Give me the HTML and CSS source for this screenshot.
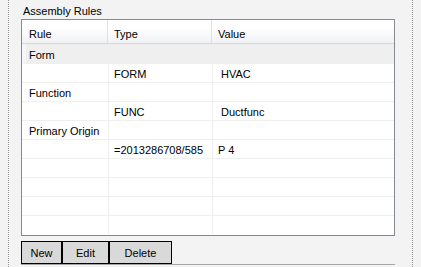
FILE: index.html
```html
<!DOCTYPE html>
<html lang="en">
<head>
  <meta charset="UTF-8" />
  <title>Assembly Rules</title>
  <link rel="stylesheet" href="styles.css">
</head>
<body>
  <div class="panel">
    <div class="caption">Assembly Rules</div>

    <div class="grid">
      <div class="grid-head">
        <div class="hcell c1">Rule</div>
        <div class="hcell c2">Type</div>
        <div class="hcell c3">Value</div>
      </div>

      <div class="group first">Form</div>
      <div class="row">
        <div class="cell c1"></div>
        <div class="cell c2">FORM</div>
        <div class="cell c3"> HVAC</div>
      </div>
      <div class="row group-row">
        <div class="cell c1">Function</div>
        <div class="cell c2"></div>
        <div class="cell c3"></div>
      </div>
      <div class="row">
        <div class="cell c1"></div>
        <div class="cell c2">FUNC</div>
        <div class="cell c3"> Ductfunc</div>
      </div>
      <div class="row">
        <div class="cell c1">Primary Origin</div>
        <div class="cell c2"></div>
        <div class="cell c3"></div>
      </div>
      <div class="row">
        <div class="cell c1"></div>
        <div class="cell c2">=2013286708/585</div>
        <div class="cell c3">P 4</div>
      </div>
      <div class="row"><div class="cell c1"></div><div class="cell c2"></div><div class="cell c3"></div></div>
      <div class="row"><div class="cell c1"></div><div class="cell c2"></div><div class="cell c3"></div></div>
      <div class="row"><div class="cell c1"></div><div class="cell c2"></div><div class="cell c3"></div></div>
      <div class="row"><div class="cell c1"></div><div class="cell c2"></div><div class="cell c3"></div></div>
    </div>

    <div class="actions">
      <button class="btn btn-new">New</button>
      <button class="btn btn-edit">Edit</button>
      <button class="btn btn-delete">Delete</button>
    </div>
    <div class="rule-line"></div>
  </div>
</body>
</html>
```

FILE: styles.css
```css
body {
  margin: 0;
  background: #f3f3f3;
  font-family: "Liberation Sans", Arial, sans-serif;
  font-size: 11px;
  color: #000;
  overflow: hidden;
}

.panel {
  box-sizing: border-box;
  margin-left: 8px;
  width: 405px;
  height: 267px;
  padding: 5px 0 0 12px;
  border-left: 1px dotted #9a9a9a;
  border-right: 1px dotted #9a9a9a;
}

.caption {
  line-height: 13px;
  padding-left: 2px;
  margin-bottom: 1px;
}

.grid {
  box-sizing: border-box;
  width: 374px;
  height: 217px;
  border: 1px solid #868a91;
  background: #fff;
}

.grid-head {
  display: flex;
  height: 23px;
  border-bottom: 1px solid #d6d7d9;
  background: linear-gradient(#ffffff 30%, #f1f2f4);
}

.hcell {
  box-sizing: border-box;
  padding: 8px 0 0 6px;
  line-height: 13px;
  border-right: 1px solid #e2e3e5;
}

.hcell.c1 { width: 86px; padding-left: 7px; }
.hcell.c2 { width: 104px; }
.hcell.c3 { width: 182px; border-right: none; }

.group {
  box-sizing: border-box;
  height: 20px;
  padding: 5px 0 0 7px;
  line-height: 13px;
  background: #efefef;
  border-left: 4px solid #f6f6f6;
  padding-left: 3px;
  border-bottom: 1px solid #efefef;
}

.row {
  display: flex;
  height: 19px;
  box-sizing: border-box;
  border-bottom: 1px solid #efefef;
}

.row:last-child {
  border-bottom: none;
  height: 18px;
}

.cell {
  box-sizing: border-box;
  padding: 4px 0 0 5px;
  line-height: 13px;
  white-space: pre;
  border-right: 1px solid #efefef;
}

.cell.c1 { width: 87px; padding-left: 7px; }
.cell.c2 { width: 104px; }
.cell.c3 { width: 181px; border-right: none; }

.actions {
  display: flex;
  margin-top: 5px;
}

.btn {
  box-sizing: border-box;
  height: 23px;
  margin: 0;
  padding: 0;
  font-family: "Liberation Sans", Arial, sans-serif;
  font-size: 11px;
  color: #000;
  background: #d9d9d9;
  border: 1px solid #000;
  border-radius: 0;
}

.btn-new { width: 41px; }
.btn-edit { width: 47px; }
.btn-delete { width: 63px; }

.rule-line {
  width: 374px;
  height: 1px;
  background: #a6a6a6;
}
```
